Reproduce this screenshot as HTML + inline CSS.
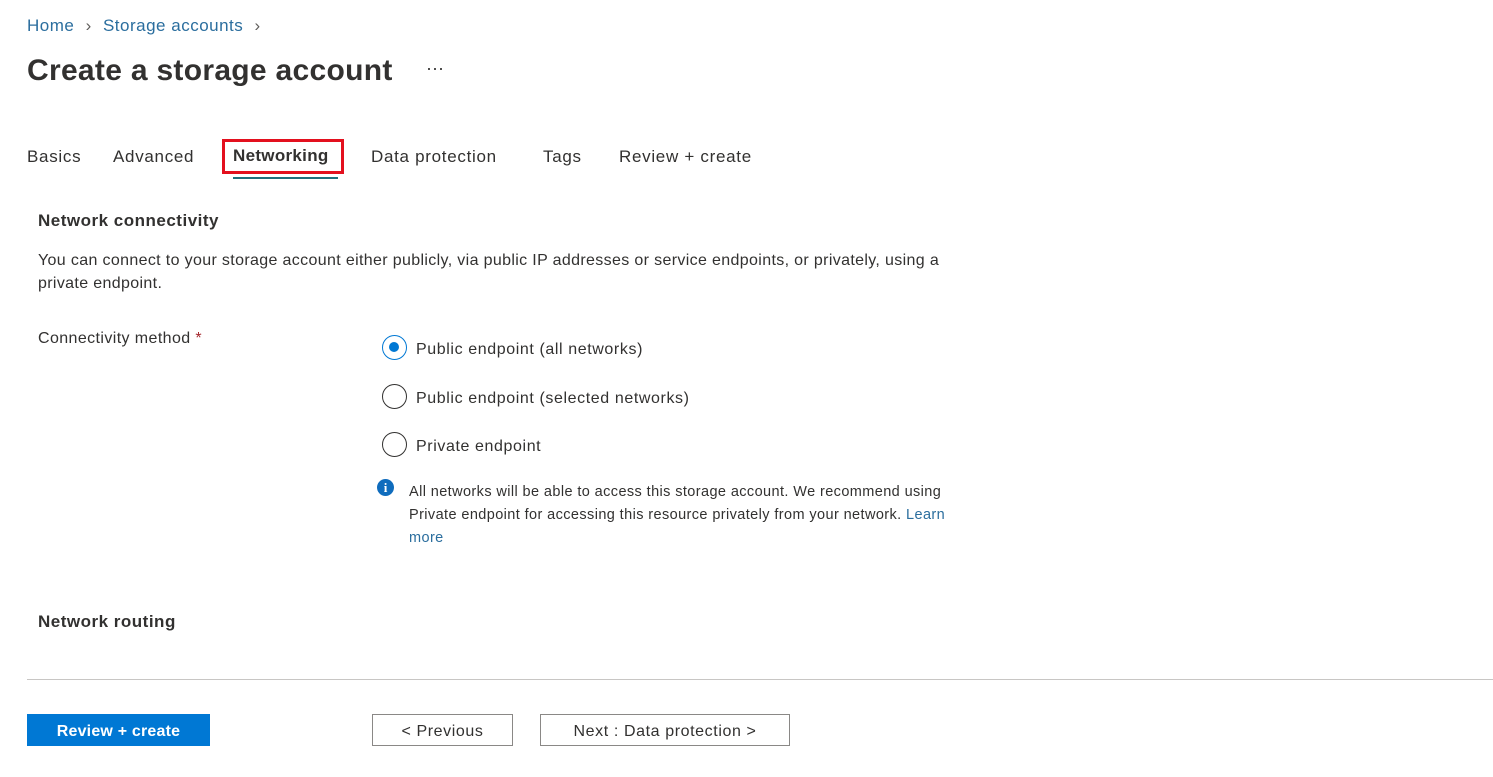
<!DOCTYPE html>
<html><head><style>
body{margin:0;width:1493px;height:777px;background:#fff;font-family:"Liberation Sans",sans-serif;color:#323130;position:relative;overflow:hidden}
.a{position:absolute;white-space:nowrap}
.t{font-size:17px;letter-spacing:0.7px;top:147px}
.radio{position:absolute;width:25px;height:25px;border:1.5px solid #323130;border-radius:50%;box-sizing:border-box}
.btn{position:absolute;top:714px;height:32px;box-sizing:border-box;border:1px solid #8a8886;font-size:16px;letter-spacing:0.6px;display:flex;align-items:center;justify-content:center;color:#323130;line-height:1;padding-top:3px}
</style></head><body>
<div class="a" style="left:27px;top:16px;font-size:17px;letter-spacing:0.5px;color:#2b6e9e">Home <span style="color:#605e5c;margin:0 6px">&#8250;</span> Storage accounts <span style="color:#605e5c;margin-left:6px">&#8250;</span></div>
<div class="a" style="left:27px;top:54px;font-size:30px;font-weight:bold;color:#323130;letter-spacing:0.3px">Create a storage account</div>
<div class="a" style="left:426px;top:58px;font-size:18px">&middot;&middot;&middot;</div>
<div class="a t" style="left:27px">Basics</div>
<div class="a t" style="left:113px">Advanced</div>
<div class="a" style="left:222px;top:139px;width:122px;height:35px;border:3px solid #e3101e;box-sizing:border-box"></div>
<div class="a t" style="left:233px;top:146px;font-weight:bold;letter-spacing:0.3px">Networking</div>
<div class="a" style="left:233px;top:177px;width:105px;height:2px;background:#1f6f7d"></div>
<div class="a t" style="left:371px">Data protection</div>
<div class="a t" style="left:543px">Tags</div>
<div class="a t" style="left:619px">Review + create</div>
<div class="a" style="left:38px;top:211px;font-size:17px;font-weight:bold;letter-spacing:0.5px">Network connectivity</div>
<div class="a" style="left:38px;top:249px;font-size:16px;letter-spacing:0.35px;line-height:23px;white-space:normal;width:950px">You can connect to your storage account either publicly, via public IP addresses or service endpoints, or privately, using a private endpoint.</div>
<div class="a" style="left:38px;top:330px;font-size:16px;letter-spacing:0.4px">Connectivity method <span style="color:#a4262c">*</span></div>
<div class="radio" style="left:382px;top:335px;border-color:#0078d4"><div style="position:absolute;left:6px;top:6px;width:10px;height:10px;border-radius:50%;background:#0078d4"></div></div>
<div class="a" style="left:416px;top:341px;font-size:16px;letter-spacing:0.6px">Public endpoint (all networks)</div>
<div class="radio" style="left:382px;top:384px"></div>
<div class="a" style="left:416px;top:390px;font-size:16px;letter-spacing:0.6px">Public endpoint (selected networks)</div>
<div class="radio" style="left:382px;top:432px"></div>
<div class="a" style="left:416px;top:438px;font-size:16px;letter-spacing:0.6px">Private endpoint</div>
<div class="a" style="left:377px;top:479px;width:17px;height:17px;border-radius:50%;background:#0f6cbd;color:#fff;font-size:13px;font-weight:bold;text-align:center;line-height:17px;font-family:'Liberation Serif',serif">i</div>
<div class="a" style="left:409px;top:481px;font-size:14.5px;letter-spacing:0.4px;line-height:23px;white-space:normal;width:570px">All networks will be able to access this storage account. We recommend using Private endpoint for accessing this resource privately from your network. <span style="color:#2b6e9e">Learn more</span></div>
<div class="a" style="left:38px;top:612px;font-size:17px;font-weight:bold;letter-spacing:0.5px">Network routing</div>
<div class="a" style="left:27px;top:679px;width:1466px;height:1px;background:#c8c6c4"></div>
<div class="btn" style="left:27px;width:183px;background:#0078d4;border-color:#0078d4;color:#fff;font-weight:bold;letter-spacing:0.2px">Review + create</div>
<div class="btn" style="left:372px;width:141px">&lt; Previous</div>
<div class="btn" style="left:540px;width:250px">Next : Data protection &gt;</div>
</body></html>
